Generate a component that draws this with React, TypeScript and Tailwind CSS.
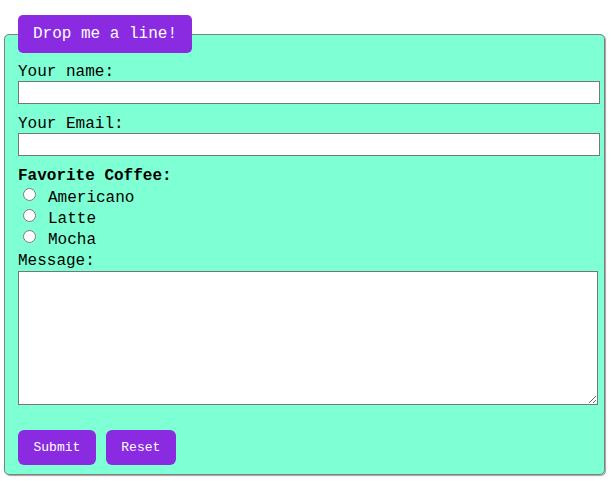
import React from "react";

export default function App() {
  const coffees = ["Americano", "Latte", "Mocha"];
  return (
    <div className="bg-white min-h-screen pt-[15px] pl-[4px] pr-[6px] pb-[6px] font-['Liberation_Mono','Courier_New',monospace] text-[16px] leading-[18px] text-black">
      <form>
        <fieldset className="bg-[#7fffd4] border border-[#808080] rounded-[5px] shadow-[1px_1px_1px_#a0a0a0] pl-[13px] pr-[4px] pt-[10px] pb-[9px] m-0">
          <legend className="bg-[#8a2be2] text-white rounded-[5px] px-[15px] h-[38px] leading-[38px] text-[16px]">
            Drop me a line!
          </legend>
          <label className="block h-[18px]" htmlFor="name">Your name:</label>
          <input id="name" type="text" className="block w-full h-[23px] border border-[#767676] bg-white" />
          <label className="block h-[18px] mt-[11px]" htmlFor="email">Your Email:</label>
          <input id="email" type="email" className="block w-full h-[23px] border border-[#767676] bg-white" />
          <div className="h-[18px] mt-[11px] font-bold">Favorite Coffee:</div>
          <div className="mt-[2px] flex flex-col">
            {coffees.map((c) => (
              <label key={c} className="flex items-center h-[21px]">
                <input type="radio" name="coffee" className="w-[13px] h-[13px] ml-[5px] mr-[12px] mb-[6px]" />
                <span>{c}</span>
              </label>
            ))}
          </div>
          <label className="block h-[18px] mt-[2px]" htmlFor="msg">Message:</label>
          <textarea id="msg" className="block w-[580px] h-[134px] mt-[1px] border border-[#767676] bg-white" />
          <div className="flex gap-[10px] mt-[25px]">
            <button type="button" className="h-[35px] px-[15.5px] bg-[#8a2be2] text-white rounded-[6px] text-[13px]">Submit</button>
            <button type="reset" className="h-[35px] px-[15.5px] bg-[#8a2be2] text-white rounded-[6px] text-[13px]">Reset</button>
          </div>
        </fieldset>
      </form>
    </div>
  );
}
